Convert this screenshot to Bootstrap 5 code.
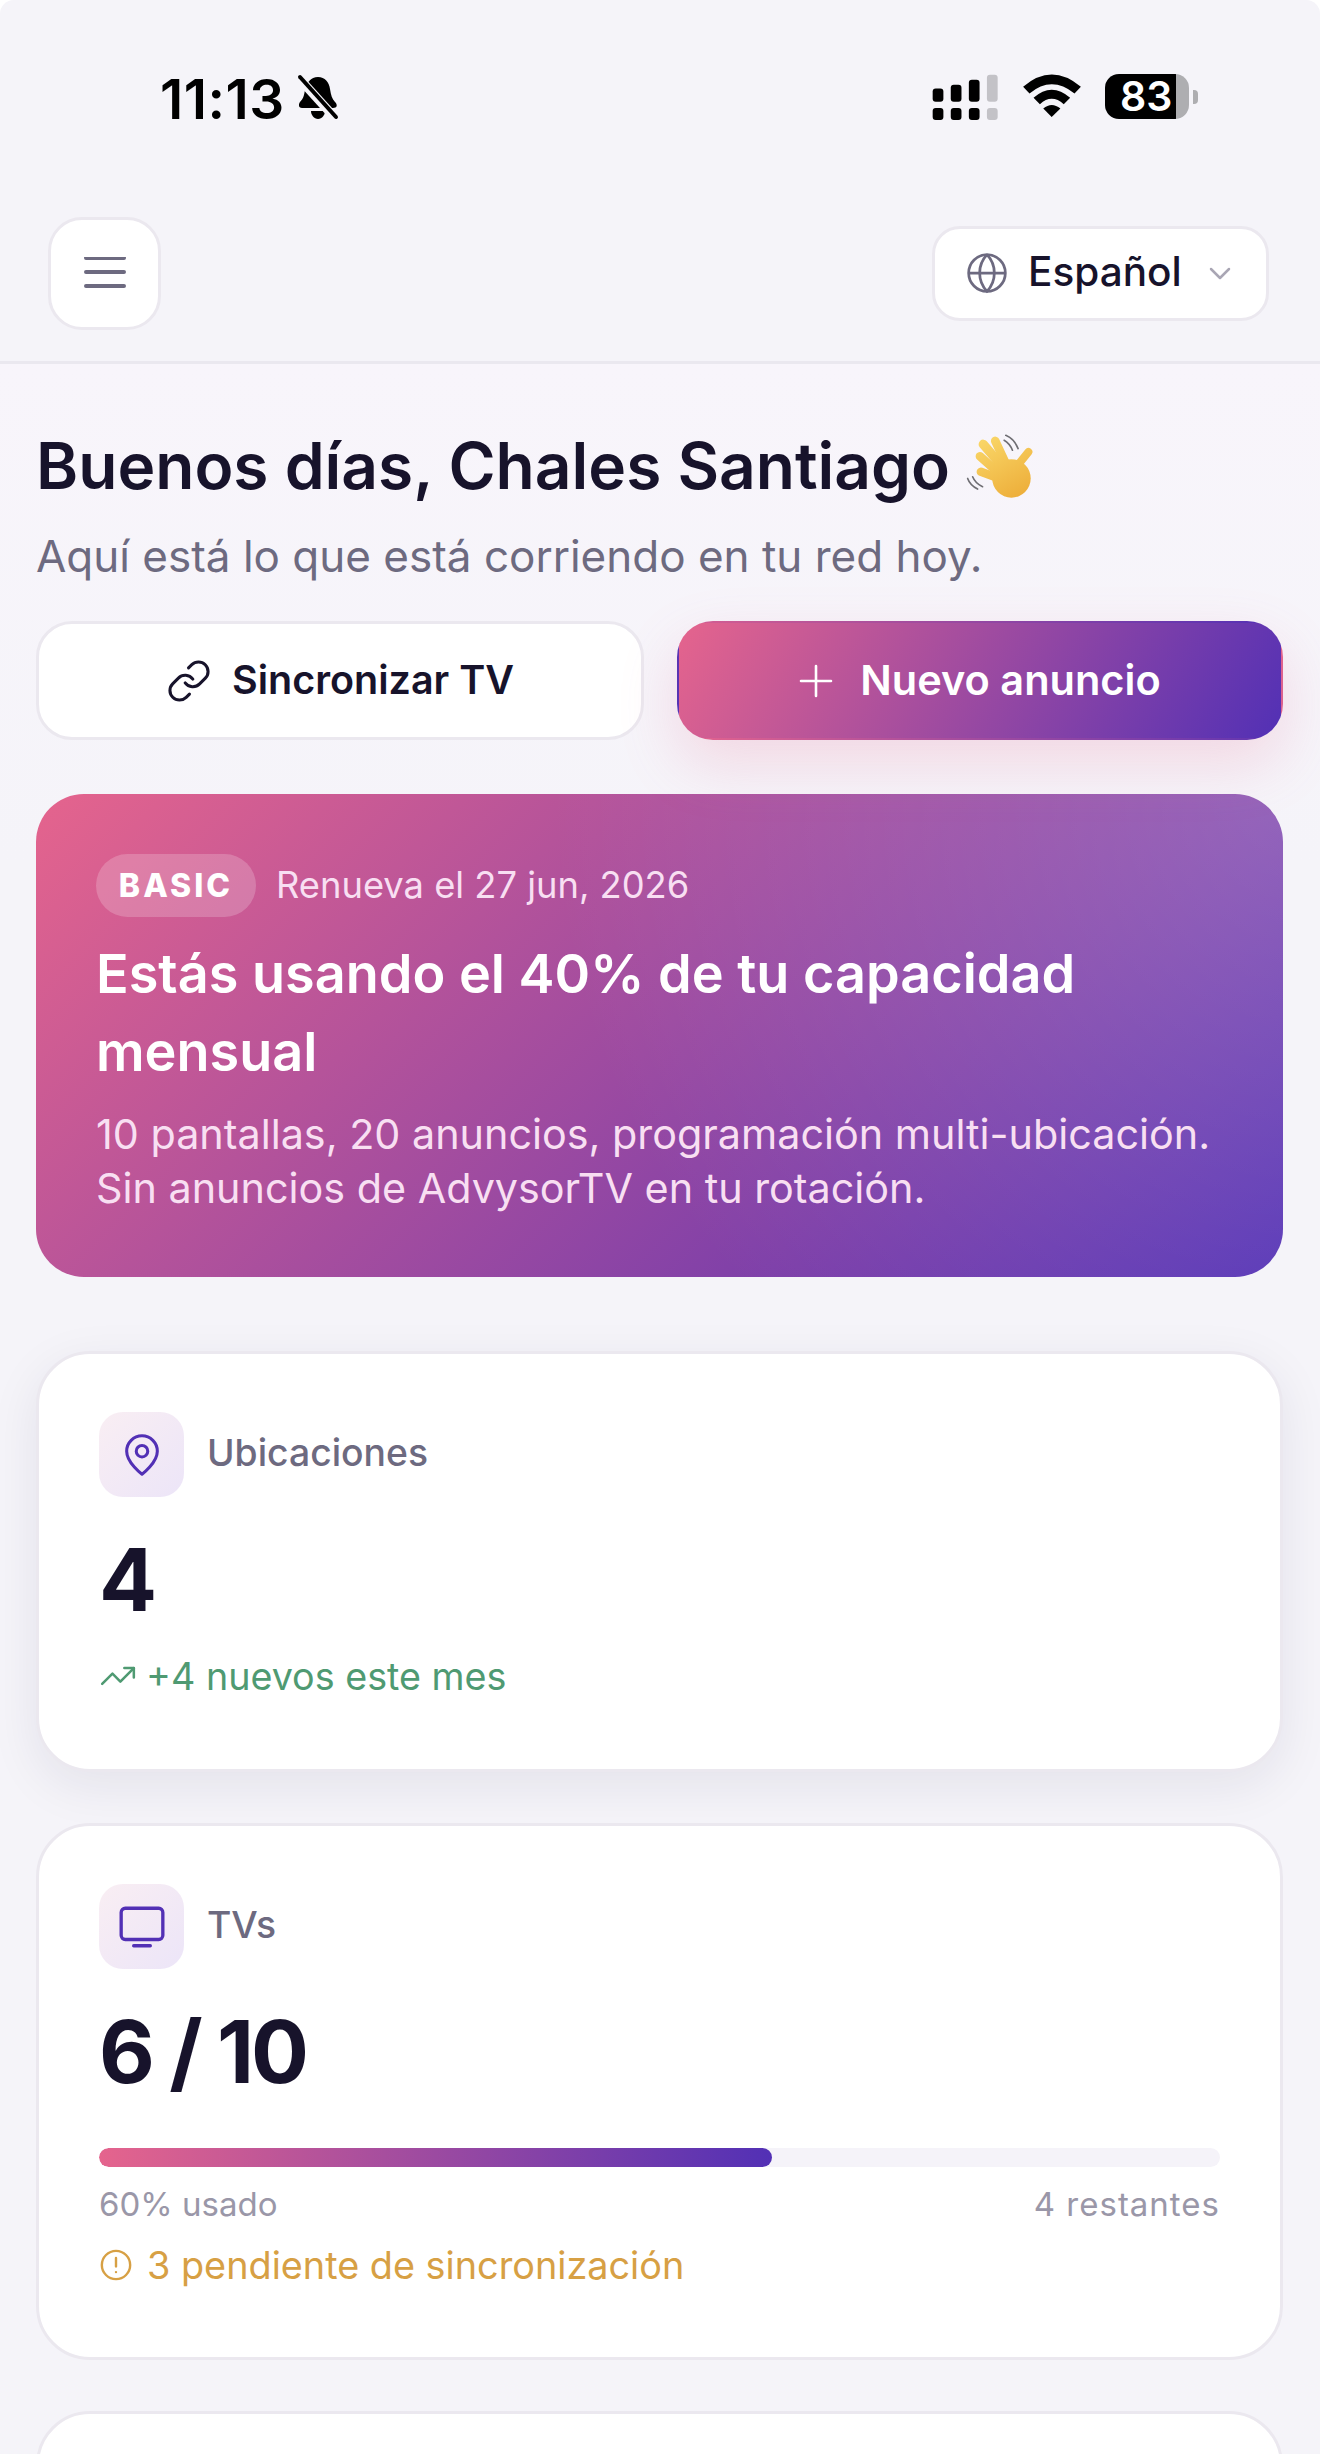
<!DOCTYPE html>
<html lang="es">
<head>
  <meta charset="UTF-8">
  <title>AdvysorTV</title>
  <link href="https://cdn.jsdelivr.net/npm/bootstrap@5.3.3/dist/css/bootstrap.min.css" rel="stylesheet">
  <style>
    html, body {
      height: 100vh;
      overflow: hidden;
    }

    body {
      background: #fff;
      font-family: Inter, "Noto Sans", sans-serif;
      color: #17132b;
    }

    .phone-screen {
      background: #f5f4f9;
      border-radius: 14px 14px 0 0;
      height: 100%;
      overflow: hidden;
    }

    /* status bar */
    .status-bar {
      height: 217px;
      padding: 74px 122px 0 160px;
      color: #000;
    }

    .status-time {
      font-size: 55px;
      font-weight: 600;
      line-height: 50px;
      letter-spacing: .5px;
    }

    .bell-icon {
      margin-left: 10px;
    }

    .batt-body {
      width: 84px;
      height: 45px;
      border-radius: 14px;
      background: linear-gradient(90deg, #000 85%, #aeaeb1 85%);
      color: #fff;
      font-size: 41px;
      font-weight: 600;
      line-height: 45px;
      padding-left: 15px;
    }

    .batt-nub {
      width: 5px;
      height: 14px;
      margin-left: 4px;
      border-radius: 0 4px 4px 0;
      background: #aeaeb1;
    }

    /* top bar */
    .top-bar {
      height: 147px;
      padding: 0 51px 31px 48px;
      border-bottom: 3px solid #eae8ef;
    }

    .menu-btn {
      width: 113px;
      height: 113px;
      padding: 0;
      background: #fff;
      border: 3px solid #ebe8ef;
      border-radius: 34px;
    }

    .lang-btn {
      width: 337px;
      height: 95px;
      padding: 0 0 2px 30px;
      background: #fff;
      border: 3px solid #ebe8ef;
      border-radius: 28px;
      color: #17132b;
      font-size: 40.5px;
      font-weight: 500;
    }

    .lang-name {
      margin-left: 19px;
    }

    .lang-caret {
      margin-left: 26px;
    }

    /* greeting */
    .main-area {
      padding: 60px 37px 0 36px;
      background: linear-gradient(#f8f5fb, #f5f4f9 500px);
    }

    .hello-title {
      font-size: 64px;
      font-weight: 600;
      line-height: 84px;
      margin: 0;
      color: #17132b;
    }

    .hello-sub {
      font-size: 44px;
      line-height: 60px;
      color: #6d6a80;
      margin: 18px 0 0;
    }

    .action-row {
      margin-top: 35px;
      gap: 33px;
    }

    .action-btn {
      flex: 1 1 0;
      height: 119px;
      border-radius: 36px;
      font-size: 39.5px;
      font-weight: 600;
    }

    .action-light {
      background: #fff;
      border: 3px solid #ebe8ef;
      color: #17132b;
    }

    .action-grad {
      background: linear-gradient(120deg, #e5648d, #5230b5);
      border: 2px solid transparent;
      color: #fff;
      font-size: 41.5px;
      box-shadow: 0 24px 60px rgba(229, 100, 141, .2);
    }

    .sync-text {
      margin-left: 20px;
    }

    .new-text {
      margin-left: 27px;
    }

    /* plan card */
    .plan-box {
      margin-top: 54px;
      height: 483px;
      padding: 60px;
      border-radius: 48px;
      color: #fff;
      background:
        radial-gradient(circle at 100% 0, rgba(255, 255, 255, .2), rgba(255, 255, 255, 0) 55%),
        linear-gradient(135deg, #e5648d 0%, #5230b5 100%);
    }

    .plan-tag {
      height: 63px;
      width: 160px;
      border-radius: 32px;
      background: rgba(255, 255, 255, .2);
      font-size: 32px;
      font-weight: 800;
      letter-spacing: 3px;
      line-height: 63px;
      text-align: center;
    }

    .plan-date {
      font-size: 36.3px;
      color: #f8dff2;
      margin-left: 20px;
    }

    .plan-title {
      font-size: 54px;
      font-weight: 600;
      line-height: 78px;
      margin: 18px 0 0;
    }

    .plan-text {
      font-size: 41.3px;
      line-height: 54px;
      color: #f8dff2;
      margin: 16px 0 0;
    }

    /* stat cards */
    .stat-box {
      background: #fff;
      border: 3px solid #ebe8ef;
      border-radius: 54px;
      padding: 58px 60px 64px;
      margin-top: 51px;
    }

    .stat-shadow {
      margin-top: 74px;
      height: 421px;
      box-shadow: 0 14px 50px rgba(30, 20, 70, .08);
    }

    .icon-tile {
      width: 85px;
      height: 85px;
      border-radius: 24px;
      background: linear-gradient(135deg, #f9eef3, #ece5f8);
    }

    .stat-label {
      font-size: 37.3px;
      font-weight: 500;
      color: #6d6a80;
      margin-left: 23px;
      margin-top: -3px;
    }

    .stat-num {
      font-size: 86px;
      font-weight: 700;
      line-height: 100px;
      margin-top: 33px;
      color: #17132b;
    }

    .stat-pair {
      letter-spacing: -3px;
    }

    .stat-trend {
      font-size: 37.7px;
      color: #4f9a72;
      margin-top: 18px;
    }

    .trend-text {
      margin-left: 9px;
    }

    .usage-track {
      height: 19px;
      margin-top: 46px;
      border-radius: 10px;
      background: #f5f3f9;
    }

    .usage-fill {
      background: linear-gradient(90deg, #e5648d, #5230b5);
      border-radius: 10px;
    }

    .usage-meta {
      font-size: 33px;
      color: #9a97a8;
      margin-top: 13px;
    }

    .usage-left {
      letter-spacing: 1px;
    }

    .stat-warn {
      font-size: 37.8px;
      color: #d7a044;
      margin-top: 7px;
    }

    .warn-text {
      margin-left: 14px;
    }

    .last-box {
      height: 300px;
    }
  </style>
</head>
<body>

<div class="phone-screen">

  <div class="status-bar d-flex justify-content-between">
    <div class="d-flex">
      <span class="status-time">11:13</span>
      <svg class="bell-icon" width="46" height="46" viewBox="0 0 44 46">
        <path fill="#000" d="M22 3c7 0 11 5 12 12 1 6 2 10 5 13 3 3 2 6-2 6H6c-3 0-4-3-2-6 3-3 4-6 5-12C10 9 15 3 22 3z"/>
        <path fill="#000" d="M15 37h14c0 4-3 8-7 8s-7-4-7-8z"/>
        <path stroke="#f5f4f9" stroke-width="9" d="M2 3l38 42"/>
        <path stroke="#000" stroke-width="4" stroke-linecap="round" d="M4 3l36 40"/>
      </svg>
    </div>
    <div class="d-flex align-items-start">
      <svg width="67" height="47" viewBox="50 70 200 140">
        <rect x="52" y="113" width="32" height="40" rx="9"/>
        <rect x="106" y="102" width="32" height="51" rx="9"/>
        <rect x="160" y="87" width="32" height="66" rx="9"/>
        <rect x="214" y="72" width="32" height="81" rx="9" fill="#c3c2c7"/>
        <rect x="52" y="171" width="32" height="36" rx="9"/>
        <rect x="106" y="171" width="32" height="36" rx="9"/>
        <rect x="160" y="171" width="32" height="36" rx="9"/>
        <rect x="214" y="171" width="32" height="36" rx="9" fill="#c3c2c7"/>
      </svg>
      <svg class="ms-4" width="58" height="43" viewBox="315 75 172 128">
        <path d="M315 113Q400 40 487 113L468 133Q400 78 334 133Z"/>
        <path d="M346 146Q400 98 455 146L436 165Q400 133 365 165Z"/>
        <path d="M375 178Q400 156 426 178L400 203Z"/>
      </svg>
      <div class="d-flex align-items-center ms-4">
        <div class="batt-body">83</div>
        <div class="batt-nub"></div>
      </div>
    </div>
  </div>

  <div class="top-bar d-flex justify-content-between align-items-center">
    <button class="btn menu-btn d-flex align-items-center justify-content-center" type="button">
      <svg width="42" height="34" viewBox="0 0 42 34" stroke="#6d6a80" stroke-width="4" stroke-linecap="round">
        <path d="M2 1h38M2 15h38M2 29h38"/>
      </svg>
    </button>
    <button class="btn lang-btn d-flex align-items-center" type="button">
      <svg width="44" height="44" viewBox="0 0 24 24" fill="none" stroke="#6d6a80" stroke-width="1.5">
        <circle cx="12" cy="12" r="10"/>
        <path d="M12 2a14.5 14.5 0 0 0 0 20 14.5 14.5 0 0 0 0-20M2 12h20"/>
      </svg>
      <span class="lang-name">Español</span>
      <svg class="lang-caret" width="24" height="14" viewBox="0 0 24 14" fill="none" stroke="#a9a6b4" stroke-width="2.5" stroke-linecap="round" stroke-linejoin="round">
        <path d="M3 3l9 9 9-9"/>
      </svg>
    </button>
  </div>

  <div class="main-area">
    <h1 class="hello-title d-flex align-items-center">Buenos días, Chales Santiago
      <svg class="ms-3" width="73" height="72" viewBox="50 30 220 215">
        <defs>
          <linearGradient id="handGrad" gradientUnits="userSpaceOnUse" x1="100" y1="60" x2="200" y2="240">
            <stop offset="0" stop-color="#f9d566"/>
            <stop offset="1" stop-color="#edae3a"/>
          </linearGradient>
        </defs>
        <g fill="none" stroke="#6f6e73" stroke-width="5" stroke-linecap="round">
          <path d="M170 45Q195 55 207 85M165 60Q182 70 190 90"/>
          <path d="M55 175Q62 195 85 207M70 170Q78 190 100 200"/>
        </g>
        <g fill="none" stroke="url(#handGrad)" stroke-linecap="round">
          <path stroke-width="26" d="M170 130L138 62"/>
          <path stroke-width="28" d="M160 140L102 72"/>
          <path stroke-width="26" d="M150 160L92 108"/>
          <path stroke-width="26" d="M150 175L95 155"/>
          <path stroke-width="24" d="M210 130L238 95"/>
        </g>
        <circle cx="187" cy="175" r="58" fill="url(#handGrad)"/>
      </svg>
    </h1>
    <p class="hello-sub">Aquí está lo que está corriendo en tu red hoy.</p>

    <div class="action-row d-flex">
      <button class="btn action-btn action-light d-flex align-items-center justify-content-center" type="button">
        <svg width="46" height="46" viewBox="0 0 24 24" fill="none" stroke="#17132b" stroke-width="1.6" stroke-linecap="round" stroke-linejoin="round">
          <path d="M10 13a5 5 0 0 0 7.54.54l3-3a5 5 0 0 0-7.07-7.07l-1.72 1.71"/>
          <path d="M14 11a5 5 0 0 0-7.54-.54l-3 3a5 5 0 0 0 7.07 7.07l1.71-1.71"/>
        </svg>
        <span class="sync-text">Sincronizar TV</span>
      </button>
      <button class="btn action-btn action-grad d-flex align-items-center justify-content-center" type="button">
        <svg width="34" height="34" viewBox="0 0 34 34" stroke="#fff" stroke-width="2.6" stroke-linecap="round">
          <path d="M17 2v30M2 17h30"/>
        </svg>
        <span class="new-text">Nuevo anuncio</span>
      </button>
    </div>

    <div class="plan-box">
      <div class="d-flex align-items-center">
        <span class="plan-tag">BASIC</span>
        <span class="plan-date">Renueva el 27 jun, 2026</span>
      </div>
      <h2 class="plan-title">Estás usando el 40% de tu capacidad mensual</h2>
      <p class="plan-text">10 pantallas, 20 anuncios, programación <span class="text-nowrap">multi-ubicación.</span> Sin anuncios de AdvysorTV en tu rotación.</p>
    </div>

    <div class="stat-box stat-shadow">
      <div class="d-flex align-items-center">
        <div class="icon-tile d-flex align-items-center justify-content-center">
          <svg width="46" height="46" viewBox="0 0 24 24" fill="none" stroke="#5230b5" stroke-width="1.6" stroke-linejoin="round">
            <path d="M20 10c0 6-8 12-8 12s-8-6-8-12a8 8 0 0 1 16 0Z"/>
            <circle cx="12" cy="10" r="3"/>
          </svg>
        </div>
        <span class="stat-label">Ubicaciones</span>
      </div>
      <div class="stat-num">4</div>
      <div class="stat-trend d-flex align-items-center">
        <svg width="38" height="38" viewBox="0 0 24 24" fill="none" stroke="#4f9a72" stroke-width="1.6" stroke-linecap="round" stroke-linejoin="round">
          <path d="M22 7l-8.5 8.5-5-5L2 17"/>
          <path d="M16 7h6v6"/>
        </svg>
        <span class="trend-text">+4 nuevos este mes</span>
      </div>
    </div>

    <div class="stat-box">
      <div class="d-flex align-items-center">
        <div class="icon-tile d-flex align-items-center justify-content-center">
          <svg width="50" height="50" viewBox="0 0 24 24" fill="none" stroke="#5230b5" stroke-width="1.6" stroke-linecap="round" stroke-linejoin="round">
            <rect x="2" y="3" width="20" height="15" rx="2"/>
            <path d="M8 21h8"/>
          </svg>
        </div>
        <span class="stat-label">TVs</span>
      </div>
      <div class="stat-num stat-pair">6 / 10</div>
      <div class="progress usage-track">
        <div class="progress-bar usage-fill" style="width: 60%"></div>
      </div>
      <div class="usage-meta d-flex justify-content-between">
        <span>60% usado</span>
        <span class="usage-left">4 restantes</span>
      </div>
      <div class="stat-warn d-flex align-items-center">
        <svg width="34" height="34" viewBox="0 0 24 24" fill="none" stroke="#d7a044" stroke-width="1.7" stroke-linecap="round">
          <circle cx="12" cy="12" r="10"/>
          <path d="M12 7v6M12 17v.01"/>
        </svg>
        <span class="warn-text">3 pendiente de sincronización</span>
      </div>
    </div>

    <div class="stat-box last-box"></div>
  </div>
</div>

<script src="https://cdn.jsdelivr.net/npm/bootstrap@5.3.3/dist/js/bootstrap.bundle.min.js"></script>
</body>
</html>
